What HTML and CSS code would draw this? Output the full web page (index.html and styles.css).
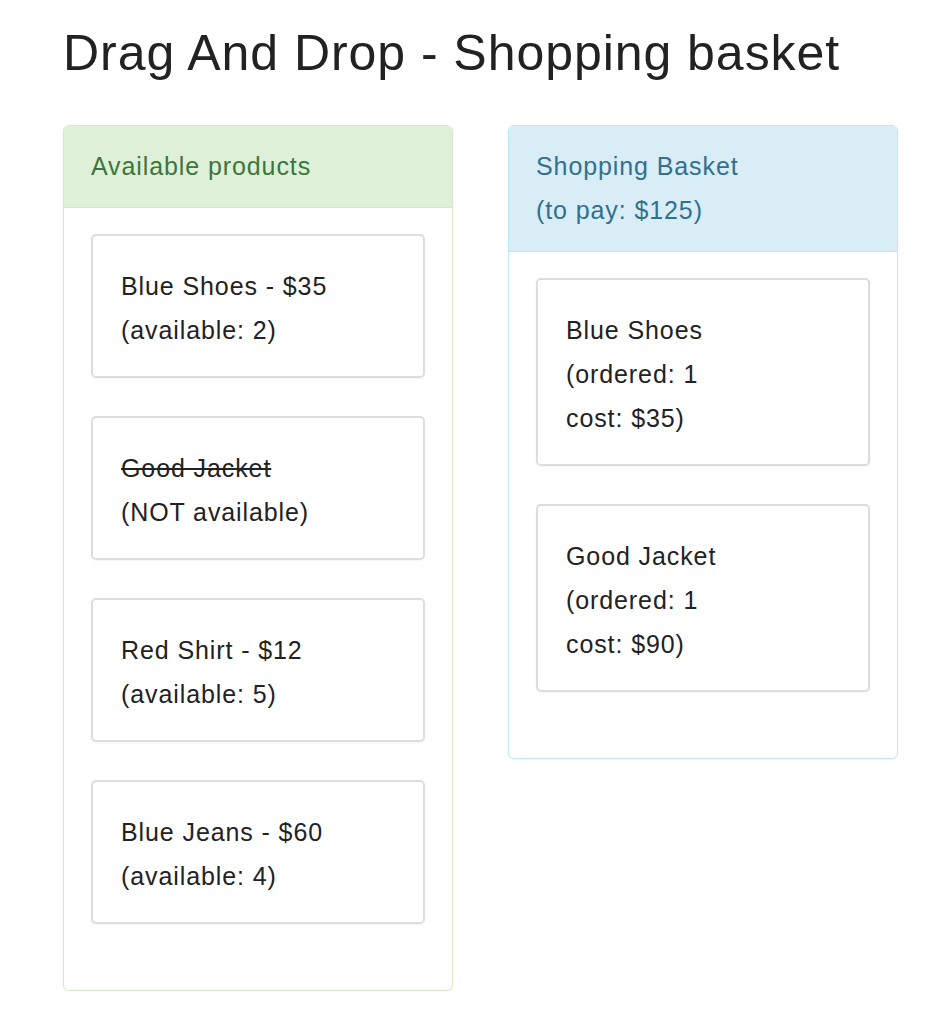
FILE: index.html
```html
<!DOCTYPE html>
<html>
<head>
<meta charset="utf-8">
<title>Drag And Drop - Shopping basket</title>
<link rel="stylesheet" href="styles.css">
</head>
<body>
<div class="page">
  <h1 class="title">Drag And Drop - Shopping basket</h1>
  <div class="row">
    <div class="panel panel-success">
      <div class="panel-heading">Available products</div>
      <div class="panel-body">
        <div class="item"><div>Blue Shoes - $35</div><div>(available: 2)</div></div>
        <div class="item"><div class="gone">Good Jacket</div><div>(NOT available)</div></div>
        <div class="item"><div>Red Shirt - $12</div><div>(available: 5)</div></div>
        <div class="item"><div>Blue Jeans - $60</div><div>(available: 4)</div></div>
      </div>
    </div>
    <div class="panel panel-info">
      <div class="panel-heading">Shopping Basket<br>(to pay: $125)</div>
      <div class="panel-body">
        <div class="item"><div>Blue Shoes</div><div>(ordered: 1</div><div>cost: $35)</div></div>
        <div class="item"><div>Good Jacket</div><div>(ordered: 1</div><div>cost: $90)</div></div>
      </div>
    </div>
  </div>
</div>
</body>
</html>
```

FILE: styles.css
```css
html, body {
  margin: 0;
  padding: 0;
  background: #fff;
}
body {
  font-family: "Liberation Sans", Arial, Helvetica, sans-serif;
  color: #333;
}
.page {
  padding: 26px 0 0 63px;
}
.title {
  margin: 0 0 44px 0;
  font-size: 50px;
  line-height: 55px;
  letter-spacing: 0.95px;
  font-weight: 400;
  color: #222;
}
.row {
  display: flex;
  align-items: flex-start;
  gap: 55px;
}
.panel {
  flex: 0 0 390px;
  width: 390px;
  box-sizing: border-box;
  border: 1px solid;
  border-radius: 6px;
  background: #fff;
  box-shadow: 0 1px 1px rgba(0,0,0,0.04);
}
.panel-heading {
  padding: 18px 27px 19px;
  font-size: 25px;
  line-height: 44px;
  letter-spacing: 0.9px;
  border-bottom: 1px solid;
  border-radius: 5px 5px 0 0;
}
.panel-success { border-color: #d6e9c6; }
.panel-success .panel-heading {
  background: #dff0d8;
  color: #3c763d;
  border-bottom-color: #d6e9c6;
}
.panel-info { border-color: #bce8f1; }
.panel-info .panel-heading {
  background: #d9edf7;
  color: #31708f;
  border-bottom-color: #bce8f1;
}
.panel-body {
  padding: 26px 27px 28px;
}
.item {
  border: 2px solid #ddd;
  border-radius: 5px;
  padding: 28px 28px 24px;
  margin-bottom: 38px;
  font-size: 25px;
  line-height: 44px;
  letter-spacing: 0.9px;
  color: #222;
  box-shadow: 0 1px 2px rgba(0,0,0,0.05);
}
.gone {
  text-decoration: line-through;
}
```
